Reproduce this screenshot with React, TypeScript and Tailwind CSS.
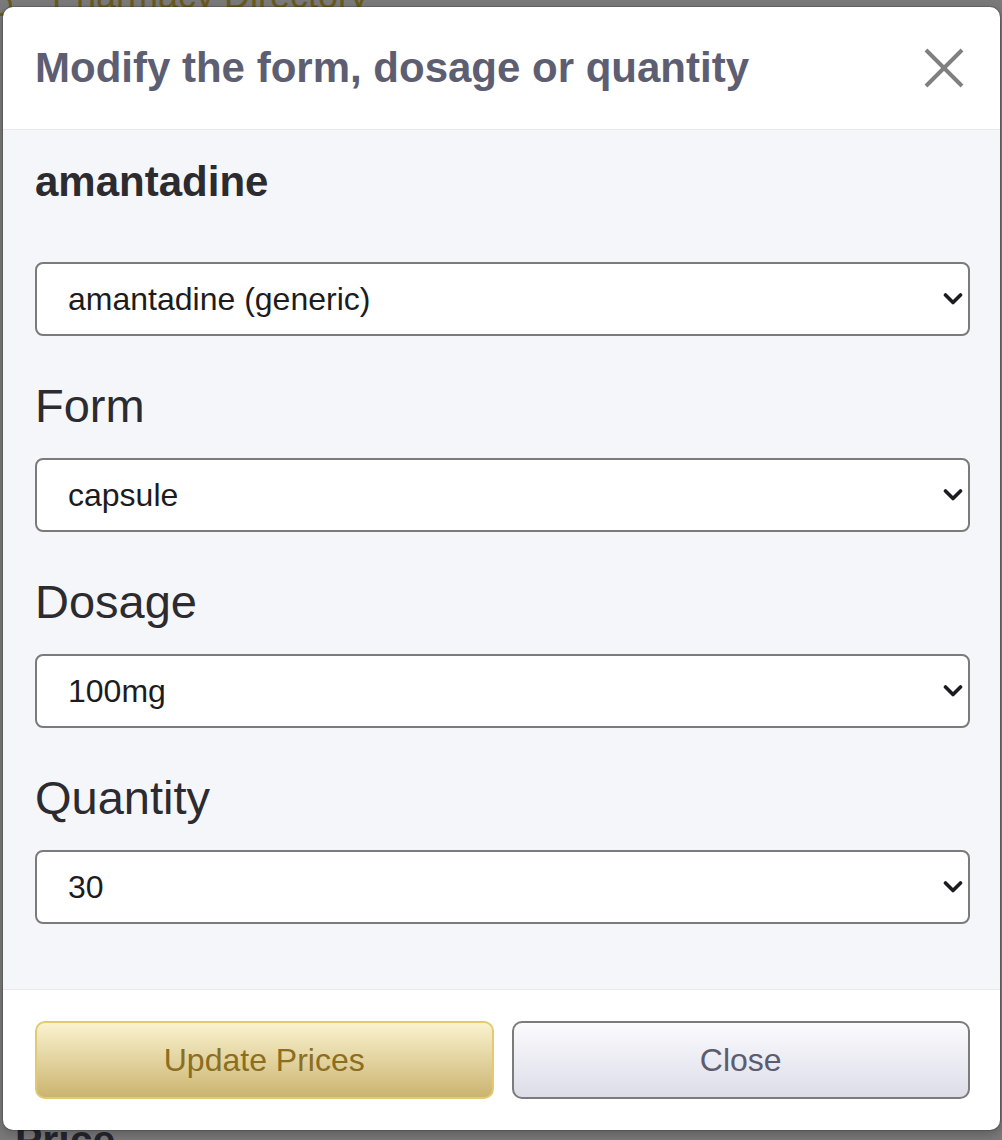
import React, { useState } from "react";

const font = { fontFamily: '"Liberation Sans", Arial, sans-serif' };

type Field = {
    label?: string;
    value: string;
    options: string[];
};

const Chevron: React.FC = () => (
    <svg
        width="20"
        height="13"
        viewBox="0 0 20 13"
        className="pointer-events-none absolute right-[7px] top-1/2 -translate-y-1/2"
    >
        <path d="M2.5 2.5 L10 10 L17.5 2.5" fill="none" stroke="#1c1c1e" strokeWidth="3.6" strokeLinecap="round" strokeLinejoin="round" />
    </svg>
);

const SelectBox: React.FC<{ field: Field; onChange: (v: string) => void }> = ({ field, onChange }) => (
    <div className="relative">
        <select
            value={field.value}
            onChange={(e) => onChange(e.target.value)}
            style={font}
            className="block w-full h-[74px] appearance-none rounded-[8px] border-2 border-[#7b7b7b] bg-white pl-[31px] pr-12 text-[32px] text-[#1c1c1e] outline-none"
        >
            {field.options.map((o) => (
                <option key={o} value={o}>
                    {o}
                </option>
            ))}
        </select>
        <Chevron />
    </div>
);

export default function App() {
    const [fields, setFields] = useState<Field[]>([
        { value: "amantadine (generic)", options: ["amantadine (generic)", "Gocovri (brand)", "Osmolex ER (brand)"] },
        { label: "Form", value: "capsule", options: ["capsule", "tablet", "syrup"] },
        { label: "Dosage", value: "100mg", options: ["100mg"] },
        { label: "Quantity", value: "30", options: ["30", "60", "90"] },
    ]);

    const update = (i: number, v: string) =>
        setFields((prev) => prev.map((f, j) => (j === i ? { ...f, value: v } : f)));

    return (
        <div style={font} className="relative w-[1002px] h-[1140px] overflow-hidden bg-[#f4f4f4]">
            {/* page behind the dialog */}
            <div className="flex flex-col h-full">
                <div className="flex items-center gap-[40px] -mt-[24px]">
                    <div className="w-[22px] h-[22px] -ml-[10px] mt-[18px] rounded-full border-[3px] border-[#d4b43c]" />
                    <span className="text-[36px] leading-[36px] text-[#d4b43c]">Pharmacy Directory</span>
                </div>
                <div className="mt-auto pl-[15px] -mb-[24px] text-[41px] font-bold leading-[48px] text-[#4a4a5a]">Price</div>
            </div>
            <div className="absolute inset-0 bg-black/50" />

            {/* dialog */}
            <div className="absolute left-[3px] top-[7px] w-[997px] h-[1123px] flex flex-col overflow-hidden rounded-[10px] bg-white shadow-[0_0_0_1px_rgba(0,0,0,0.15),0_4px_12px_rgba(0,0,0,0.25)]">
                <div className="flex h-[123px] shrink-0 items-center justify-between border-b border-[#e8eaef] pl-[32px] pr-[36px]">
                    <h1 className="text-[42px] font-bold leading-[50px] text-[#5d5e72]">
                        Modify the form, dosage or quantity
                    </h1>
                    <button aria-label="Close" className="flex h-[40px] w-[40px] items-center justify-center">
                        <svg width="40" height="40" viewBox="0 0 40 40">
                            <path d="M2 2 L38 38 M38 2 L2 38" stroke="#808080" strokeWidth="4" />
                        </svg>
                    </button>
                </div>

                <div className="flex-1 bg-[#f5f6fa] pl-[32px] pr-[30px] pt-[27px]">
                    <h2 className="text-[42px] font-bold leading-[50px] text-[#2b2b30]">amantadine</h2>
                    <div className="mt-[55px]">
                        <SelectBox field={fields[0]} onChange={(v) => update(0, v)} />
                    </div>
                    {fields.slice(1).map((f, i) => (
                        <div key={f.label} className="mt-[42px]">
                            <label className="block text-[47px] leading-[56px] text-[#2b2b30] mb-[24px]">{f.label}</label>
                            <SelectBox field={f} onChange={(v) => update(i + 1, v)} />
                        </div>
                    ))}
                </div>

                <div className="flex shrink-0 gap-[18px] border-t border-[#e8eaef] pl-[32px] pr-[30px] pt-[31px] pb-[31px]">
                    <button className="h-[78px] flex-1 rounded-[10px] border-2 border-[#e2ca72] bg-gradient-to-b from-[#faf3cf] to-[#cbb470] text-[32px] text-[#8b6e1f]">
                        Update Prices
                    </button>
                    <button className="h-[78px] flex-1 rounded-[10px] border-2 border-[#7b7b7b] bg-gradient-to-b from-[#fbfbfe] to-[#dcdde8] text-[32px] text-[#5c5c6e]">
                        Close
                    </button>
                </div>
            </div>
        </div>
    );
}
